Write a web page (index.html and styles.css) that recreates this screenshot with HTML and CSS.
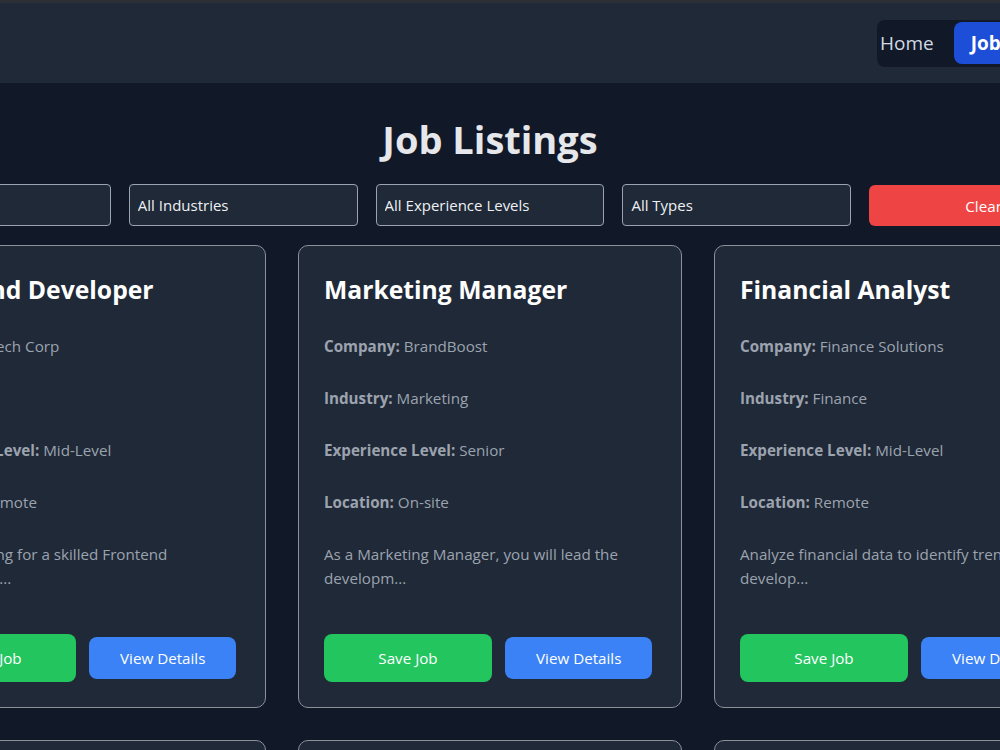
FILE: index.html
```html
<!DOCTYPE html>
<html lang="en">
<head>
    <meta charset="UTF-8">
    <meta name="viewport" content="width=device-width, initial-scale=1.0">
    <title>Job Listings</title>
    <link rel="stylesheet" href="styles.css">
</head>
<body>
    <header class="site-header">
        <div class="wrap">
            <div class="header-bar">
                <div class="logo">JobHub</div>
                <nav class="nav">
                    <a class="nav-link" href="#">Home</a>
                    <a class="nav-link active" href="#">Jobs</a>
                    <a class="nav-link" href="#">Saved</a>
                </nav>
            </div>
        </div>
    </header>

    <main class="wrap">
        <h1 class="page-title">Job Listings</h1>

        <!-- Filters -->
        <div class="filters">
            <input class="filter" type="text" placeholder="Search...">
            <select class="filter">
                <option>All Industries</option>
                <option>IT</option>
                <option>Marketing</option>
                <option>Finance</option>
            </select>
            <select class="filter">
                <option>All Experience Levels</option>
                <option>Entry-Level</option>
                <option>Mid-Level</option>
                <option>Senior</option>
            </select>
            <select class="filter">
                <option>All Types</option>
                <option>Remote</option>
                <option>On-site</option>
            </select>
            <button class="btn-clear">Clear</button>
        </div>

        <!-- Job cards -->
        <div class="job-grid">
            <div class="job-card">
                <h2>Frontend Developer</h2>
                <p><strong>Company:</strong> Tech Corp</p>
                <p><strong>Industry:</strong> IT</p>
                <p><strong>Experience Level:</strong> Mid-Level</p>
                <p><strong>Location:</strong> Remote</p>
                <p class="desc">We are looking for a skilled Frontend Developer to...</p>
                <div class="card-actions">
                    <button class="btn-save">Save Job</button>
                    <button class="btn-view">View Details</button>
                </div>
            </div>

            <div class="job-card">
                <h2>Marketing Manager</h2>
                <p><strong>Company:</strong> BrandBoost</p>
                <p><strong>Industry:</strong> Marketing</p>
                <p><strong>Experience Level:</strong> Senior</p>
                <p><strong>Location:</strong> On-site</p>
                <p class="desc">As a Marketing Manager, you will lead the developm...</p>
                <div class="card-actions">
                    <button class="btn-save">Save Job</button>
                    <button class="btn-view">View Details</button>
                </div>
            </div>

            <div class="job-card">
                <h2>Financial Analyst</h2>
                <p><strong>Company:</strong> Finance Solutions</p>
                <p><strong>Industry:</strong> Finance</p>
                <p><strong>Experience Level:</strong> Mid-Level</p>
                <p><strong>Location:</strong> Remote</p>
                <p class="desc">Analyze financial data to identify trends, develop...</p>
                <div class="card-actions">
                    <button class="btn-save">Save Job</button>
                    <button class="btn-view">View Details</button>
                </div>
            </div>

            <div class="job-card">
                <h2>Backend Developer</h2>
                <p><strong>Company:</strong> CodeWorks</p>
                <p><strong>Industry:</strong> IT</p>
                <p><strong>Experience Level:</strong> Senior</p>
                <p><strong>Location:</strong> Remote</p>
                <p class="desc">Build and maintain scalable APIs and services for...</p>
                <div class="card-actions">
                    <button class="btn-save">Save Job</button>
                    <button class="btn-view">View Details</button>
                </div>
            </div>

            <div class="job-card">
                <h2>Content Writer</h2>
                <p><strong>Company:</strong> WordSmith</p>
                <p><strong>Industry:</strong> Marketing</p>
                <p><strong>Experience Level:</strong> Entry-Level</p>
                <p><strong>Location:</strong> Remote</p>
                <p class="desc">Write engaging content for blogs, social media an...</p>
                <div class="card-actions">
                    <button class="btn-save">Save Job</button>
                    <button class="btn-view">View Details</button>
                </div>
            </div>

            <div class="job-card">
                <h2>Accountant</h2>
                <p><strong>Company:</strong> LedgerPro</p>
                <p><strong>Industry:</strong> Finance</p>
                <p><strong>Experience Level:</strong> Entry-Level</p>
                <p><strong>Location:</strong> On-site</p>
                <p class="desc">Prepare financial statements and manage accounts ...</p>
                <div class="card-actions">
                    <button class="btn-save">Save Job</button>
                    <button class="btn-view">View Details</button>
                </div>
            </div>
        </div>
    </main>
</body>
</html>
```

FILE: styles.css
```css
/* Job board - dark theme */
html, body {
    overflow: hidden;
}

body {
    margin: 0;
    background: #111827;
    color: #e5e7eb;
    font-family: "Segoe UI", "Open Sans", sans-serif;
    border-top: 3px solid #2c2f34;
}

.wrap {
    width: 980px;
    display: flex;
    flex-direction: column;
    align-items: center;
}

/* Header */
.site-header {
    background: #1f2937;
}

.header-bar {
    width: 1216px;
    flex: none;
    height: 80px;
    display: flex;
    align-items: center;
}

.logo {
    flex: 0 0 995px;
    font-size: 22px;
    font-weight: 700;
    color: white;
    padding-left: 10px;
    box-sizing: border-box;
}

.nav {
    display: flex;
    align-items: center;
    height: 47px;
    padding: 0 2px;
    box-sizing: border-box;
    background: #111827;
    border-radius: 8px;
}

.nav-link {
    display: flex;
    align-items: center;
    height: 42px;
    padding: 0 17px;
    font-size: 19px;
    color: #d1d9e6;
    text-decoration: none;
    border-radius: 8px;
}

.nav-link:first-child {
    padding: 0 20px 0 1px;
}

.nav-link.active {
    background: #1d4ed8;
    color: white;
    font-weight: 700;
}

/* Title + filters */
.page-title {
    margin: 35px 0 23px;
    font-size: 38px;
    line-height: 43px;
    font-weight: 700;
    color: #e5e7eb;
}

.filters {
    width: 1216px;
    flex: none;
    display: grid;
    grid-template-columns: repeat(5, 1fr);
    gap: 18px;
}

.filter {
    height: 42px;
    padding: 0 8px;
    box-sizing: border-box;
    background: #1f2937;
    border: 1px solid #9ca3af;
    border-radius: 4px;
    color: #eef0f3;
    font-family: inherit;
    font-size: 15px;
    appearance: none;
    outline: none;
}

.filter::placeholder {
    color: #9ca3af;
}

.btn-clear {
    height: 41px;
    margin-top: 1px;
    border: none;
    border-radius: 6px;
    background: #ef4444;
    color: white;
    font-family: inherit;
    font-size: 15.2px;
}

/* Cards */
.job-grid {
    width: 1216px;
    flex: none;
    margin-top: 19px;
    display: grid;
    grid-template-columns: repeat(3, 1fr);
    gap: 32px;
}

.job-card {
    background: #1f2937;
    border: 1px solid #8b9099;
    border-radius: 10px;
    padding: 27px 25px 25px;
}

.job-card h2 {
    margin: 0 0 27px;
    font-size: 24.7px;
    line-height: 34px;
    font-weight: 700;
    color: white;
}

.job-card p {
    margin: 0 0 28px;
    font-size: 15.2px;
    line-height: 24px;
    color: #9ca3af;
}

.job-card p strong {
    font-weight: 700;
}

.job-card p.desc {
    margin-bottom: 44px;
}

.card-actions {
    display: flex;
    align-items: center;
    gap: 13px;
}

.btn-save,
.btn-view {
    border: none;
    border-radius: 8px;
    color: white;
    font-family: inherit;
    font-size: 15.2px;
    cursor: pointer;
}

.btn-save {
    width: 168px;
    height: 48px;
    background: #22c55e;
}

.btn-view {
    height: 42px;
    padding: 0 31px;
    background: #3b82f6;
}
```
